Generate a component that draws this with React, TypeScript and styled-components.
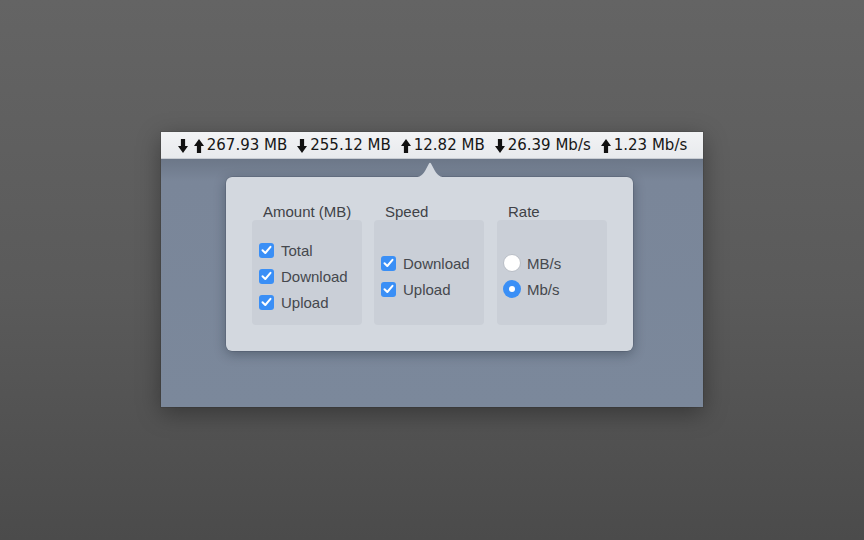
import React from "react";
import styled, { createGlobalStyle } from "styled-components";

const Global = createGlobalStyle`
  html, body { margin: 0; padding: 0; }
  body {
    width: 864px; height: 540px; overflow: hidden;
    background: linear-gradient(180deg, #646464 0%, #5a5a5a 55%, #4b4b4b 100%);
  }
`;

const Page = styled.div`
  width: 864px; height: 540px;
  box-sizing: border-box;
  padding: 132px 0 0 161px;
`;

const Window = styled.div`
  width: 542px; height: 275px;
  display: flex; flex-direction: column;
  box-shadow: 0 6px 22px rgba(0,0,0,0.35), 0 0 0 1px rgba(0,0,0,0.08);
`;

const MenuBar = styled.div`
  height: 27px;
  background: linear-gradient(180deg, #f2f3f5, #e8eaed);
  display: flex; align-items: center; justify-content: center;
  padding-left: 1px;
  font-family: "DejaVu Sans", sans-serif;
  font-size: 15px;
  color: #161616;
  white-space: pre;
  border-bottom: 1px solid #c8ccd2;
  box-sizing: border-box;
`;

const Item = styled.span`
  display: inline-flex; align-items: center;
  margin-right: 10px;
  &:last-child { margin-right: 0; }
`;

const ArrowBox = styled.span<{ $gap: number }>`
  display: inline-flex;
  margin-right: ${(p) => p.$gap}px;
  margin-top: 1px;
`;

const Body = styled.div`
  flex: 1;
  background: linear-gradient(180deg, #6c7788 0px, #7a8699 22px, #7b889b 100%);
  padding: 18px 0 0 65px;
`;

const Popover = styled.div`
  position: relative;
  width: 407px; height: 174px;
  box-sizing: border-box;
  background: #d3d8df;
  border-radius: 6px;
  box-shadow: 0 3px 12px rgba(20,28,40,0.35), 0 0 0 0.5px rgba(40,50,65,0.3);
  padding: 24px 26px 26px 26px;
  display: flex; gap: 12px;
  font-family: "Liberation Sans", Arial, sans-serif;
  color: #3a3d42;
`;

const Tip = styled.svg`
  position: absolute;
  left: 184px; top: -16px;
`;

const Group = styled.div<{ $w: number; $shift?: number }>`
  width: ${(p) => p.$w}px;
  margin-left: ${(p) => p.$shift ?? 0}px;
  display: flex; flex-direction: column;
`;

const Title = styled.div`
  font-size: 15px;
  height: 19px;
  line-height: 21px;
  padding-left: 11px;
  color: #3f4247;
`;

const Box = styled.div`
  height: 105px;
  background: #cacfd7;
  border-radius: 4px;
  display: flex; flex-direction: column; justify-content: center;
  padding: 7px 0 0 7px;
  box-sizing: border-box;
  gap: 7px;
`;

const Row = styled.div`
  display: flex; align-items: center;
  height: 19px;
  font-size: 15px;
  color: #45484d;
`;

const Check = styled.span`
  width: 15px; height: 15px;
  border-radius: 3px;
  background: #3a8ff6;
  display: inline-flex; align-items: center; justify-content: center;
  margin-right: 7px;
`;

const Radio = styled.span<{ $on?: boolean }>`
  width: 18px; height: 18px;
  border-radius: 50%;
  box-sizing: border-box;
  background: ${(p) => (p.$on ? "#3a8ff6" : "#ffffff")};
  border: ${(p) => (p.$on ? "none" : "1px solid #b9bec6")};
  display: inline-flex; align-items: center; justify-content: center;
  margin-left: -1px;
  margin-right: 6px;
  &::after {
    content: "";
    display: ${(p) => (p.$on ? "block" : "none")};
    width: 6px; height: 6px; border-radius: 50%;
    background: #fff;
  }
`;

const Down = ({ gap = 3 }: { gap?: number }) => (
  <ArrowBox $gap={gap}>
    <svg width="10" height="14" viewBox="0 0 10 14">
      <path d="M2.9 0h4.2v7h2.9L5 14 0 7h2.9z" fill="#111" />
    </svg>
  </ArrowBox>
);
const Up = ({ gap = 3 }: { gap?: number }) => (
  <ArrowBox $gap={gap}>
    <svg width="10" height="14" viewBox="0 0 10 14">
      <path d="M2.9 14h4.2V7h2.9L5 0 0 7h2.9z" fill="#111" />
    </svg>
  </ArrowBox>
);

const Tick = () => (
  <svg width="11" height="10" viewBox="0 0 11 10">
    <path d="M1.5 5.2l2.8 2.8L9.5 1.8" stroke="#fff" strokeWidth="2" fill="none" strokeLinecap="round" strokeLinejoin="round" />
  </svg>
);

const CheckRow = ({ label }: { label: string }) => (
  <Row>
    <Check><Tick /></Check>
    {label}
  </Row>
);

export default function App() {
  return (
    <>
      <Global />
      <Page>
        <Window>
          <MenuBar>
            <Item><Down gap={6} /><Up />267.93 MB</Item>
            <Item><Down />255.12 MB</Item>
            <Item><Up />12.82 MB</Item>
            <Item><Down />26.39 Mb/s</Item>
            <Item><Up />1.23 Mb/s</Item>
          </MenuBar>
          <Body>
            <Popover>
              <Tip width="40" height="17" viewBox="0 0 40 17">
                <path d="M0 17 C8 17 12 15 15 10 L19 2.5 C19.5 1.5 20.5 1.5 21 2.5 L25 10 C28 15 32 17 40 17 Z" fill="#d3d8df" />
              </Tip>
              <Group $w={110}>
                <Title>Amount (MB)</Title>
                <Box>
                  <CheckRow label="Total" />
                  <CheckRow label="Download" />
                  <CheckRow label="Upload" />
                </Box>
              </Group>
              <Group $w={110}>
                <Title>Speed</Title>
                <Box>
                  <CheckRow label="Download" />
                  <CheckRow label="Upload" />
                </Box>
              </Group>
              <Group $w={110} $shift={1}>
                <Title>Rate</Title>
                <Box>
                  <Row><Radio />MB/s</Row>
                  <Row><Radio $on />Mb/s</Row>
                </Box>
              </Group>
            </Popover>
          </Body>
        </Window>
      </Page>
    </>
  );
}
